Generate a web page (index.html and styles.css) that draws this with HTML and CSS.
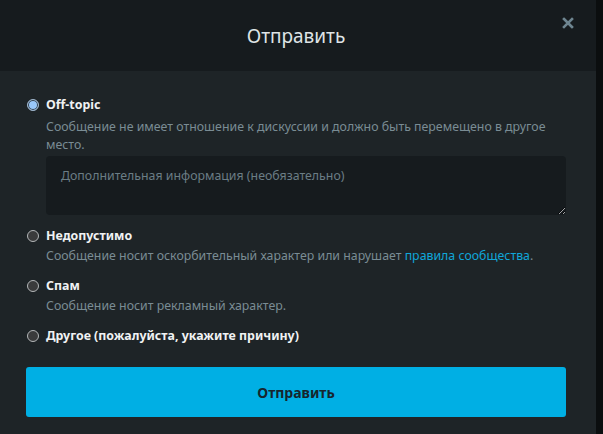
FILE: index.html
```html
<!DOCTYPE html>
<html lang="ru">
<head>
    <meta charset="UTF-8">
    <meta name="viewport" content="width=device-width, initial-scale=1.0">
    <title>Отправить</title>
    <link rel="stylesheet" href="styles.css">
</head>
<body>

    <div class="page">
        <div class="modal">
            <div class="modal-header">
                <h2>Отправить</h2>
                <button class="close" type="button" aria-label="Закрыть">
                    <svg width="12" height="12" viewBox="0 0 12 12">
                        <path d="M2 2 L10 10 M10 2 L2 10" stroke="#6e8590" stroke-width="2.6" stroke-linecap="square"/>
                    </svg>
                </button>
            </div>

            <form class="modal-body" id="flag-form">
                <label class="option">
                    <span class="radio checked"></span>
                    <span class="option-title">Off-topic</span>
                    <span class="option-desc">Сообщение не имеет отношение к дискуссии и должно быть перемещено в другое место.</span>
                </label>
                <textarea class="extra" placeholder="Дополнительная информация (необязательно)"></textarea>

                <label class="option">
                    <span class="radio"></span>
                    <span class="option-title">Недопустимо</span>
                    <span class="option-desc">Сообщение носит оскорбительный характер или нарушает <a href="#">правила сообщества</a>.</span>
                </label>

                <label class="option">
                    <span class="radio"></span>
                    <span class="option-title">Спам</span>
                    <span class="option-desc">Сообщение носит рекламный характер.</span>
                </label>

                <label class="option">
                    <span class="radio"></span>
                    <span class="option-title">Другое (пожалуйста, укажите причину)</span>
                </label>

                <button class="submit" type="submit">Отправить</button>
            </form>
        </div>
        <div class="backdrop"></div>
    </div>

</body>
</html>
```

FILE: styles.css
```css
body {
    margin: 0;
    font-family: "Noto Sans", "Open Sans", sans-serif;
    background-color: #0b0e0f;
}
.page {
    display: flex;
    height: 434px;
    overflow: hidden;
}
.modal {
    width: 596px;
    flex-shrink: 0;
    background-color: #1e2427;
}
.backdrop {
    flex: 1;
    background-color: #0b0e0f;
}
.modal-header {
    position: relative;
    height: 71px;
    background-color: #161b1e;
    display: flex;
    align-items: center;
    justify-content: center;
}
.modal-header h2 {
    margin: 0;
    padding-right: 4px;
    font-size: 19px;
    font-weight: normal;
    color: #dfe4e6;
}
.close {
    position: absolute;
    top: 17px;
    right: 22px;
    width: 12px;
    height: 12px;
    padding: 0;
    border: none;
    background: none;
    display: flex;
}
.modal-body {
    padding: 24px 30px 0 26px;
    display: flex;
    flex-direction: column;
}
.option {
    display: grid;
    grid-template-columns: 20px 1fr;
    margin-bottom: 11px;
}
.radio {
    width: 10px;
    height: 10px;
    margin-top: 4px;
    margin-left: 1px;
    border: 1px solid #b3b6b8;
    border-radius: 50%;
    background-color: #3a3b3c;
}
.radio.checked {
    border-color: #9fb4c9;
    background-color: #99c8fb;
    box-shadow: inset 0 0 0 1px #2d3a46;
}
.option-title {
    font-size: 12.4px;
    font-weight: bold;
    line-height: 20px;
    color: #f0f2f3;
}
.option-desc {
    grid-column: 2;
    margin-top: 1px;
    font-size: 12.35px;
    line-height: 18px;
    color: #7a8c94;
}
.option-desc a {
    color: #10a6d9;
    text-decoration: none;
}
.option:first-child {
    margin-bottom: 2px;
}
.option:first-child .option-desc {
    margin-top: 3px;
}
.extra {
    margin: 0 0 11px 20px;
    height: 59px;
    box-sizing: border-box;
    padding: 11px 15px;
    border: none;
    border-radius: 4px;
    background-color: #161b1e;
    font-family: inherit;
    font-size: 12.35px;
    color: #c9d0d3;
}
.extra::placeholder {
    color: #6b7d85;
}
.submit {
    margin-top: 10px;
    height: 50px;
    border: none;
    border-radius: 3px;
    background-color: #00afe4;
    color: #17252d;
    font-family: inherit;
    font-size: 14px;
    font-weight: bold;
    cursor: pointer;
}
```
